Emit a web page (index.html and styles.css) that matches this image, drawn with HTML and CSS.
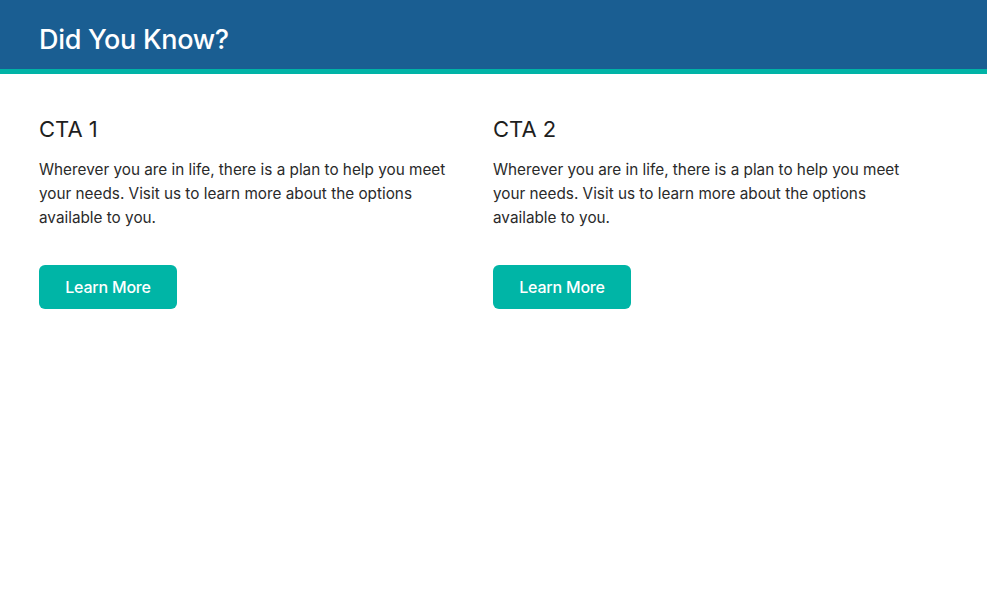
FILE: index.html
```html
<!DOCTYPE html>
<html>
<head>
<meta charset="utf-8">
<link rel="stylesheet" href="styles.css">
</head>
<body>
<header class="banner">
  <h1 class="banner-title">Did You Know?</h1>
</header>
<main class="cta-grid">
  <section class="cta">
    <h2 class="cta-title">CTA 1</h2>
    <p class="cta-text">Wherever you are in life, there is a plan to help you meet your needs. Visit us to learn more about the options available to you.</p>
    <a class="cta-btn" href="#">Learn More</a>
  </section>
  <section class="cta">
    <h2 class="cta-title">CTA 2</h2>
    <p class="cta-text">Wherever you are in life, there is a plan to help you meet your needs. Visit us to learn more about the options available to you.</p>
    <a class="cta-btn" href="#">Learn More</a>
  </section>
</main>
</body>
</html>
```
FILE: styles.css
```css
* { box-sizing: border-box; }
body {
  margin: 0;
  font-family: Inter, "Liberation Sans", sans-serif;
  color: #222;
  background: #fff;
}
.banner {
  background: #1a5e92;
  border-bottom: 5px solid #00b3a6;
  height: 74px;
  padding: 0 39px;
  display: flex;
  align-items: center;
}
.banner-title {
  margin: 0;
  color: #fff;
  font-size: 27px;
  font-weight: 500;
  letter-spacing: -0.3px;
  padding-top: 10px;
}
.cta-grid {
  display: grid;
  grid-template-columns: 454px 454px;
  padding: 40px 39px;
}
.cta {
  padding-right: 24px;
}
.cta-title {
  margin: 0 0 14px;
  font-size: 22px;
  font-weight: 400;
  line-height: 30px;
  color: #1e1e1e;
}
.cta-text {
  margin: 0 0 35px;
  font-size: 15.3px;
  line-height: 24px;
  color: #2a2a2a;
}
.cta-btn {
  display: inline-flex;
  align-items: center;
  justify-content: center;
  width: 138px;
  height: 44px;
  background: #00b5a6;
  border-radius: 6px;
  color: #fff;
  font-size: 16px;
  font-weight: 500;
  text-decoration: none;
  letter-spacing: -0.2px;
}
```
